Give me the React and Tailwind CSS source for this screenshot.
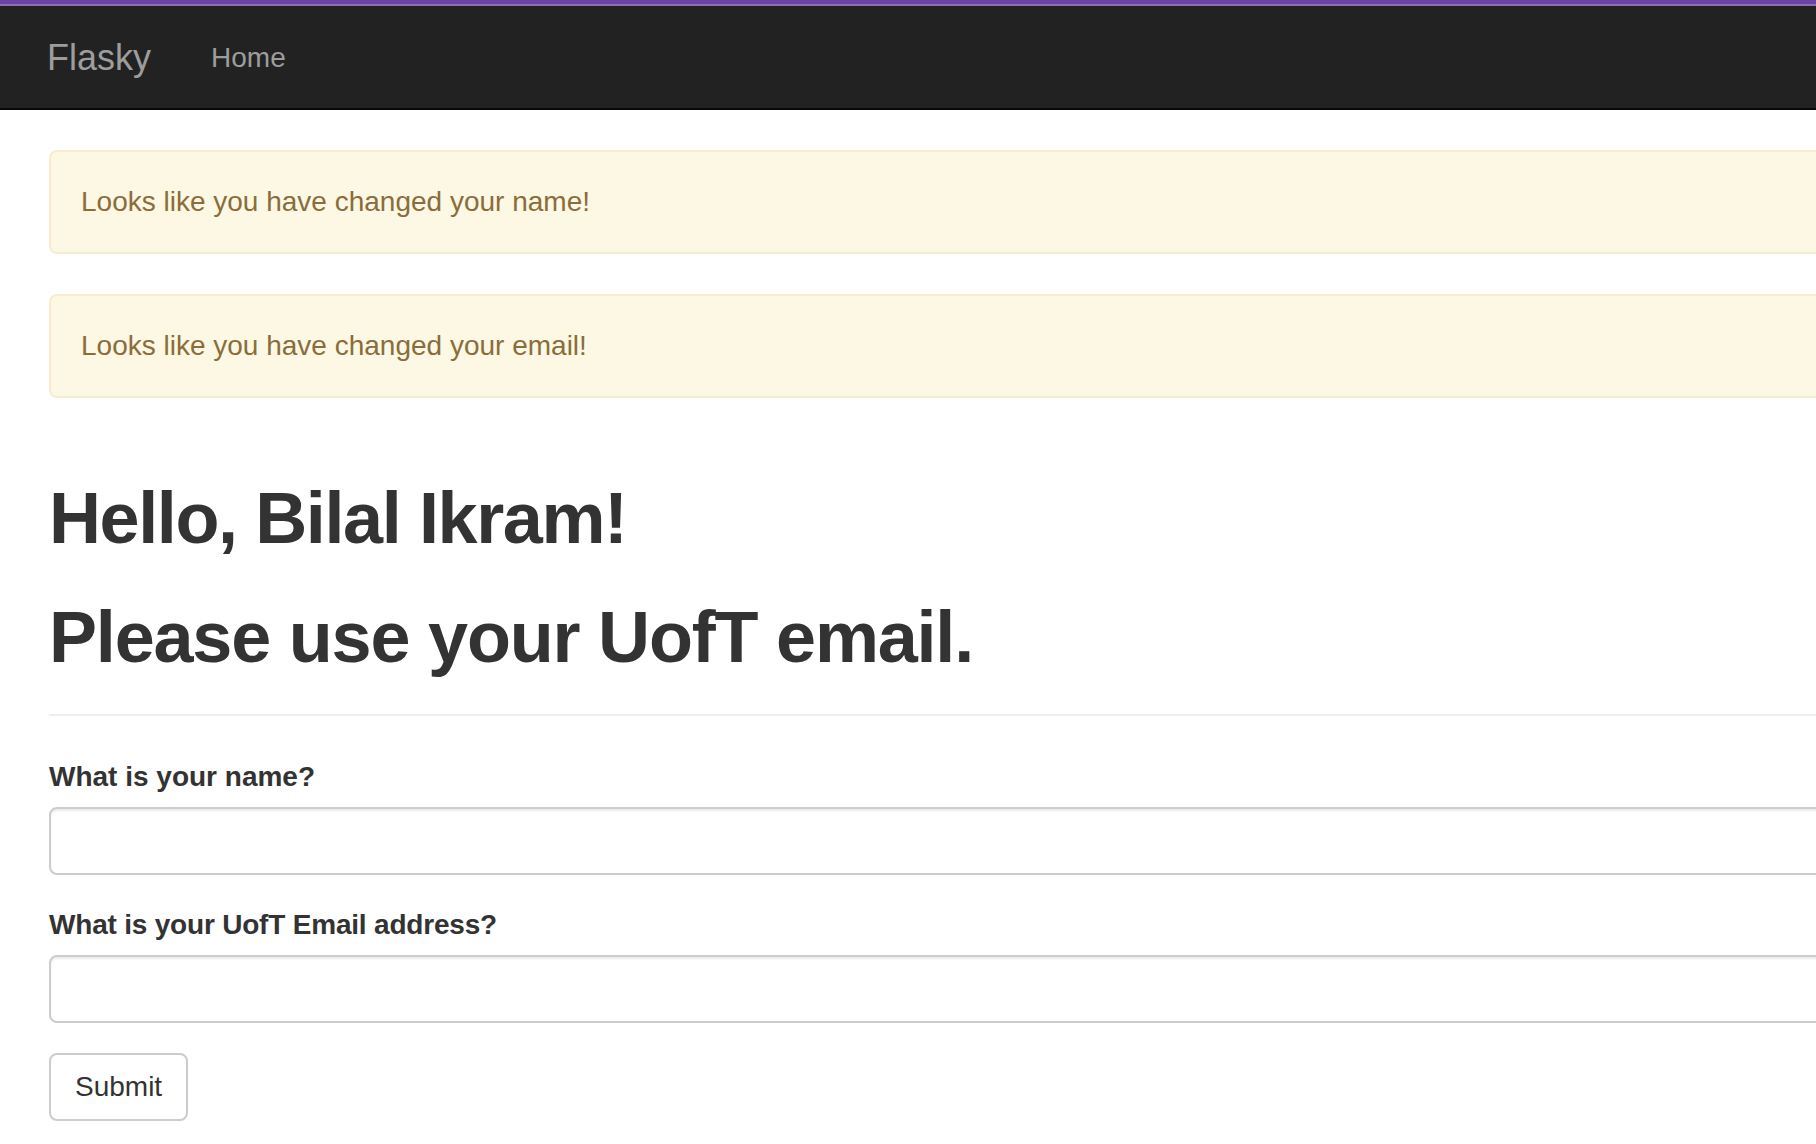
export default function App() {
  const font = { fontFamily: '"Liberation Sans", Arial, Helvetica, sans-serif' };
  return (
    <div className="w-full overflow-hidden bg-white text-[#333333]" style={font}>
      <div className="w-[1900px]">
        <div className="h-[4px] bg-[#6a45a0]" />
        <div className="h-[2px] bg-[#8c6db6]" />
        <nav className="flex h-[104px] items-center border-b-2 border-[#080808] bg-[#222222] pl-[47px] pt-[2px]">
          <a className="text-[36px] leading-[40px] text-[#9d9d9d]">Flasky</a>
          <a className="ml-[60px] text-[28px] leading-[40px] text-[#9d9d9d]">Home</a>
        </nav>
        <main className="pl-[49px] pt-[40px]">
          <div className="mb-[40px] rounded-[8px] border-2 border-[#faebcc] bg-[#fcf8e3] px-[30px] py-[30px] text-[28px] leading-[40px] text-[#8a6d3b]">
            Looks like you have changed your name!
          </div>
          <div className="rounded-[8px] border-2 border-[#faebcc] bg-[#fcf8e3] px-[30px] py-[30px] text-[28px] leading-[40px] text-[#8a6d3b]">
            Looks like you have changed your email!
          </div>
          <div className="mt-[81px] border-b-2 border-[#eeeeee] pb-[17px]">
            <h1 className="text-[72px] font-bold leading-[79px] tracking-[-1.4px]">Hello, Bilal Ikram!</h1>
            <h1 className="mt-[40px] mb-[20px] text-[72px] font-bold leading-[79px] tracking-[-1.2px]">Please use your UofT email.</h1>
          </div>
          <form className="mt-[41px]">
            <div className="mb-[30px]">
              <label className="mb-[10px] block text-[28px] font-bold leading-[40px]">What is your name?</label>
              <input
                type="text"
                className="block h-[68px] w-full rounded-[8px] border-2 border-[#cccccc] bg-white px-[24px] text-[28px] shadow-[inset_0_2px_2px_rgba(0,0,0,0.075)] outline-none"
              />
            </div>
            <div className="mb-[30px]">
              <label className="mb-[10px] block text-[28px] font-bold leading-[40px] tracking-[-0.2px]">What is your UofT Email address?</label>
              <input
                type="text"
                className="block h-[68px] w-full rounded-[8px] border-2 border-[#cccccc] bg-white px-[24px] text-[28px] shadow-[inset_0_2px_2px_rgba(0,0,0,0.075)] outline-none"
              />
            </div>
            <button
              type="button"
              className="h-[68px] rounded-[8px] border-2 border-[#cccccc] bg-white px-[24px] text-[28px] leading-[40px] text-[#333333]"
            >
              Submit
            </button>
          </form>
        </main>
      </div>
    </div>
  );
}
